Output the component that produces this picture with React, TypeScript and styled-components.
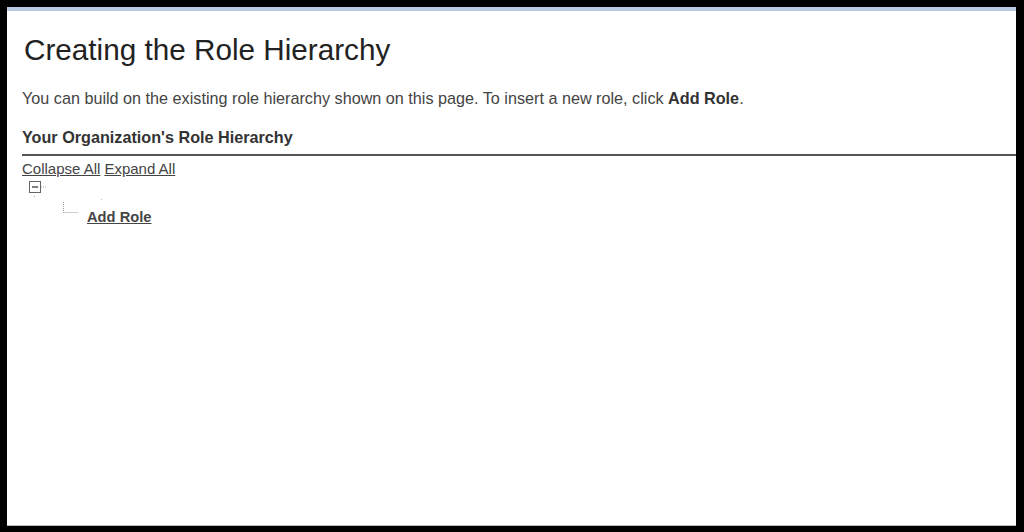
import styled, { createGlobalStyle } from 'styled-components';

const GlobalStyle = createGlobalStyle`
  html, body {
    margin: 0;
    padding: 0;
    background: #000;
  }
  body {
    font-family: 'Liberation Sans', Arial, sans-serif;
  }
`;

const Frame = styled.div`
  width: 1024px;
  height: 532px;
  box-sizing: border-box;
  padding: 7px 8px 6px 7px;
  background: #000;
`;

const Page = styled.div`
  height: 100%;
  box-sizing: border-box;
  background: #fff;
  border-top: 4px solid #b9c9e0;
  border-bottom: 1px solid #bdbdbd;
  padding: 22px 0 0 15px;
  display: flex;
  flex-direction: column;
`;

const Title = styled.h1`
  margin: 0 0 0 2px;
  font-size: 29.7px;
  font-weight: normal;
  color: #222;
  line-height: 34px;
`;

const Intro = styled.p`
  margin: 22px 0 0 0;
  font-size: 16.2px;
  color: #444;
  line-height: 18px;

  b {
    color: #333;
  }
`;

const SectionHeading = styled.h2`
  margin: 21px 0 0 0;
  font-size: 16.2px;
  font-weight: bold;
  color: #333;
  line-height: 18px;
  padding-bottom: 8px;
  border-bottom: 2px solid #555;
`;

const Toolbar = styled.div`
  margin-top: 4px;
  display: flex;
  gap: 4px;
  font-size: 15px;
  line-height: 17px;
`;

const Link = styled.a<{ $bold?: boolean }>`
  color: #444;
  text-decoration: underline;
  font-weight: ${(p) => (p.$bold ? 'bold' : 'normal')};
  cursor: pointer;
`;

const Tree = styled.div`
  display: flex;
  flex-direction: column;
`;

const RootRow = styled.div`
  margin: 4px 0 0 7px;
  height: 21px;
`;

const ChildRow = styled.div`
  display: flex;
  align-items: flex-start;
  margin-left: 41px;
`;

const ChildLabel = styled(Link)`
  font-size: 14.7px;
  line-height: 18px;
  margin: 6px 0 0 8px;
`;

const Toggle = () => (
  <svg width="24" height="18" viewBox="0 0 24 18">
    <rect x="0.5" y="0.5" width="11" height="11" fill="#fff" stroke="#666" />
    <line x1="3" y1="6" x2="9" y2="6" stroke="#555" strokeWidth="1.5" />
    <line x1="12" y1="6" x2="17" y2="6" stroke="#aaa" strokeDasharray="1 1" />
    <rect x="5" y="15" width="1" height="1" fill="#999" />
  </svg>
);

const Elbow = () => (
  <svg width="16" height="14" viewBox="0 0 16 14" style={{ overflow: 'visible' }}>
    <line x1="0.5" y1="0" x2="0.5" y2="10.5" stroke="#999" strokeDasharray="1 1" />
    <line x1="0.5" y1="10.5" x2="15" y2="10.5" stroke="#999" strokeDasharray="1 1" />
    <rect x="38" y="-3" width="1" height="1" fill="#bbb" />
  </svg>
);

export default function App() {
  return (
    <>
      <GlobalStyle />
      <Frame>
        <Page>
          <Title>Creating the Role Hierarchy</Title>
          <Intro>
            You can build on the existing role hierarchy shown on this page. To insert a new role,
            click <b>Add Role</b>.
          </Intro>
          <SectionHeading>Your Organization's Role Hierarchy</SectionHeading>
          <Toolbar>
            <Link>Collapse All</Link>
            <Link>Expand All</Link>
          </Toolbar>
          <Tree>
            <RootRow>
              <Toggle />
            </RootRow>
            <ChildRow>
              <Elbow />
              <ChildLabel $bold>Add Role</ChildLabel>
            </ChildRow>
          </Tree>
        </Page>
      </Frame>
    </>
  );
}
